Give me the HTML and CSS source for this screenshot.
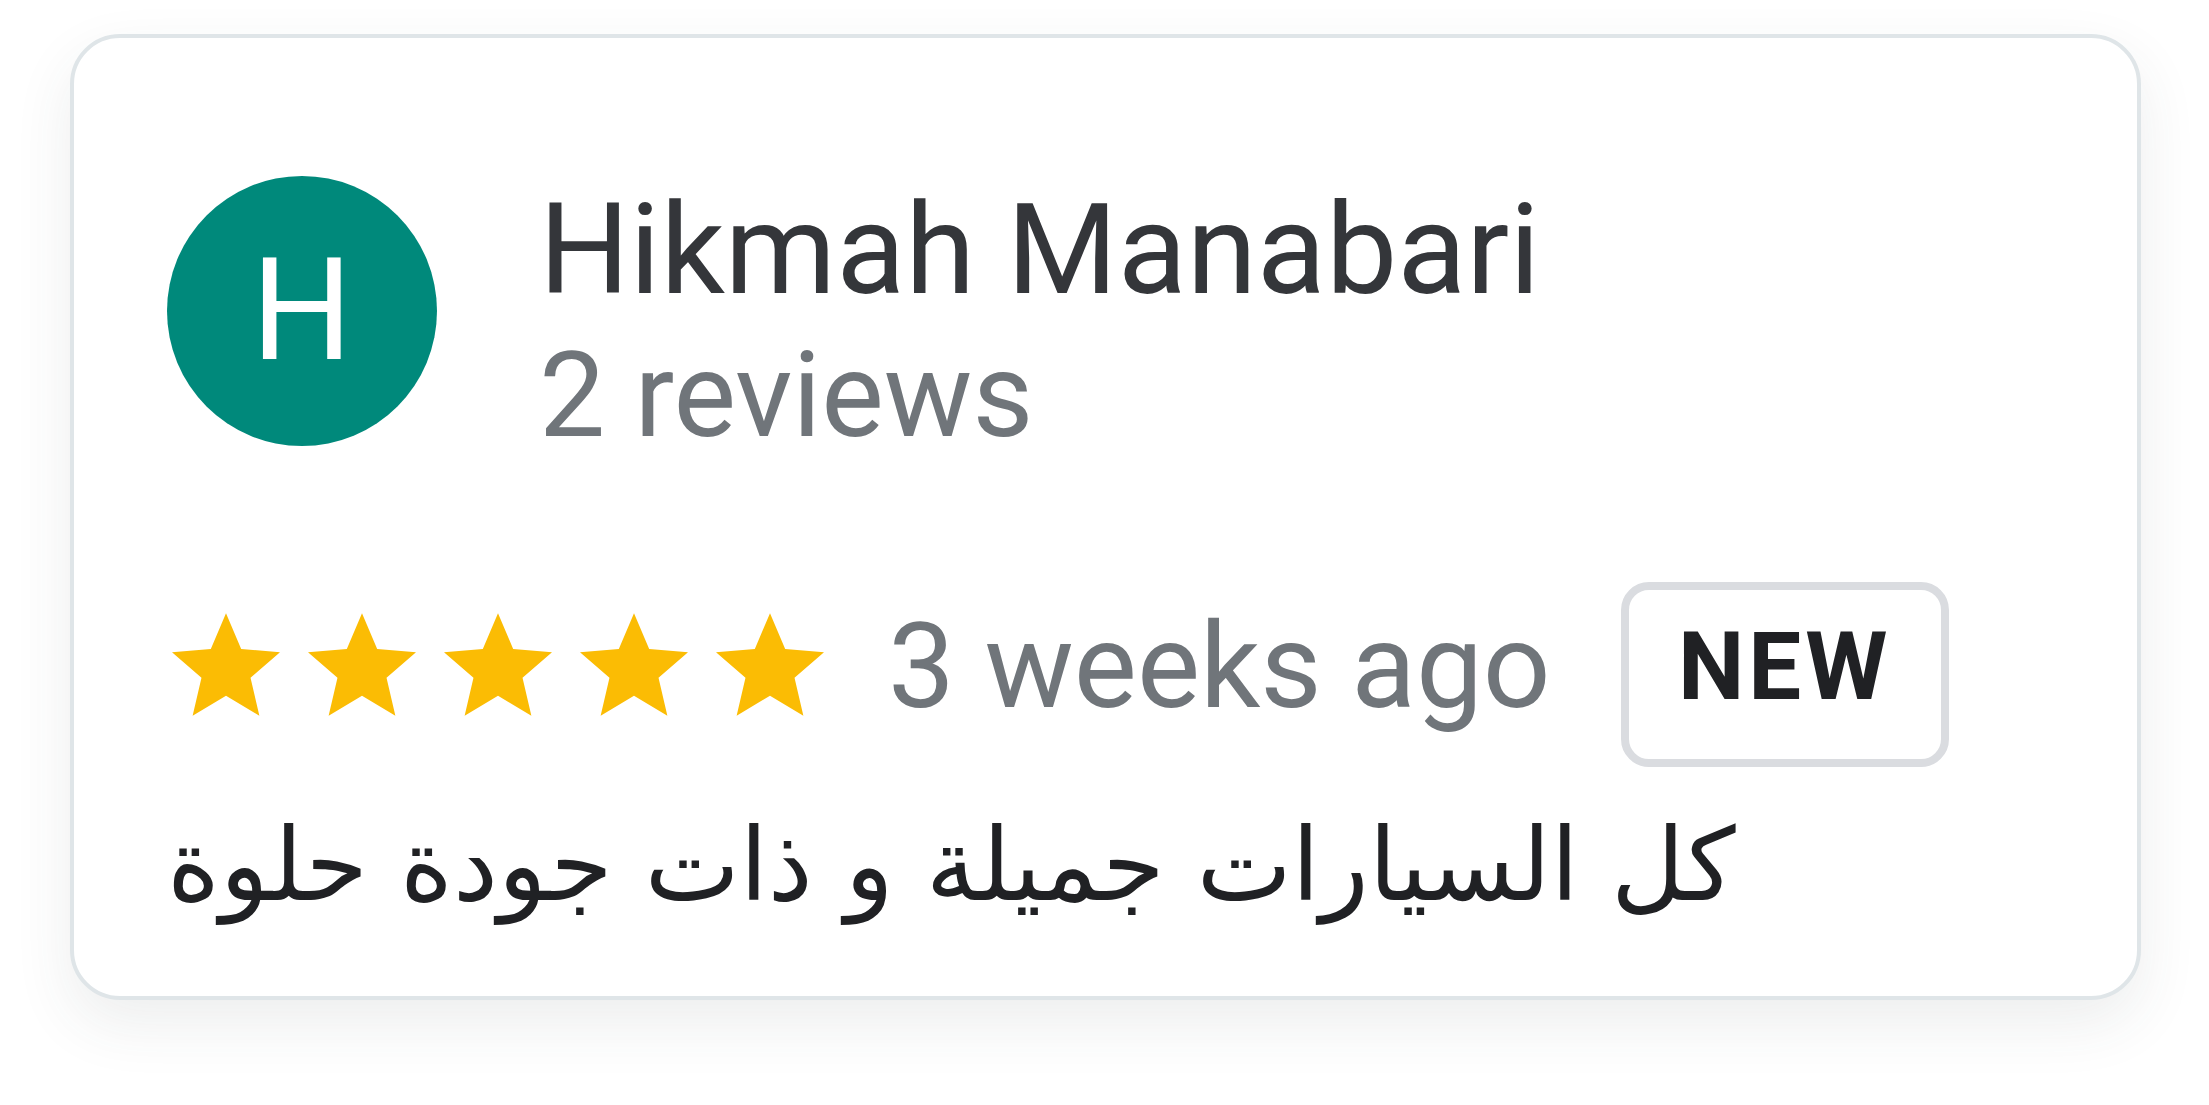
FILE: index.html
```html
<!DOCTYPE html>
<html lang="en">
<head>
<meta charset="utf-8">
<title>Review</title>
<link rel="stylesheet" href="styles.css">
</head>
<body>
<div class="card">
  <div class="header">
    <div class="avatar">H</div>
    <div class="who">
      <div class="name">Hikmah Manabari</div>
      <div class="count">2 reviews</div>
    </div>
  </div>
  <div class="meta">
    <div class="stars">
      <svg class="star" viewBox="2 2 20 19"><path d="M12 17.27L18.18 21l-1.64-7.03L22 9.24l-7.19-.61L12 2 9.19 8.63 2 9.24l5.46 4.73L5.82 21z"/></svg>
      <svg class="star" viewBox="2 2 20 19"><path d="M12 17.27L18.18 21l-1.64-7.03L22 9.24l-7.19-.61L12 2 9.19 8.63 2 9.24l5.46 4.73L5.82 21z"/></svg>
      <svg class="star" viewBox="2 2 20 19"><path d="M12 17.27L18.18 21l-1.64-7.03L22 9.24l-7.19-.61L12 2 9.19 8.63 2 9.24l5.46 4.73L5.82 21z"/></svg>
      <svg class="star" viewBox="2 2 20 19"><path d="M12 17.27L18.18 21l-1.64-7.03L22 9.24l-7.19-.61L12 2 9.19 8.63 2 9.24l5.46 4.73L5.82 21z"/></svg>
      <svg class="star" viewBox="2 2 20 19"><path d="M12 17.27L18.18 21l-1.64-7.03L22 9.24l-7.19-.61L12 2 9.19 8.63 2 9.24l5.46 4.73L5.82 21z"/></svg>
    </div>
    <div class="when">3 weeks ago</div>
    <div class="badge">NEW</div>
  </div>
  <div class="text">كل السيارات جميلة و ذات جودة حلوة</div>
</div>
</body>
</html>
```

FILE: styles.css
```css
html, body {
  margin: 0;
  padding: 0;
  background: #ffffff;
}

body {
  padding: 34px 0 0 70px;
  height: 1105px;
  box-sizing: border-box;
  font-family: Roboto, "DejaVu Sans", sans-serif;
}

.card {
  box-sizing: border-box;
  width: 2071px;
  height: 966px;
  border: 4px solid #dfe5e8;
  border-radius: 50px;
  background: #ffffff;
  box-shadow: 0 24px 60px rgba(60, 64, 67, 0.09);
  padding: 138px 60px 0 93px;
}

.header {
  display: flex;
  align-items: flex-start;
  height: 270px;
}

.avatar {
  width: 270px;
  height: 270px;
  border-radius: 50%;
  background: #00897b;
  color: #ffffff;
  font-family: Roboto, sans-serif;
  font-size: 142px;
  line-height: 270px;
  text-align: center;
  flex: none;
}

.who {
  margin-left: 102px;
  margin-top: 2px;
}

.name {
  font-size: 127px;
  line-height: 143px;
  color: #34363a;
  white-space: nowrap;
}

.count {
  font-size: 118px;
  line-height: 150px;
  color: #70757a;
  white-space: nowrap;
}

.meta {
  display: flex;
  align-items: center;
  margin-top: 136px;
  height: 185px;
}

.stars {
  display: flex;
  gap: 28px;
  margin-left: 5px;
  margin-bottom: 20px;
}

.star {
  width: 108px;
  height: 103px;
  fill: #fbbc04;
  display: block;
}

.when {
  margin-left: 64px;
  font-size: 119px;
  line-height: 150px;
  color: #70757a;
  white-space: nowrap;
  margin-bottom: 16px;
}

.badge {
  box-sizing: border-box;
  margin-left: 70px;
  width: 328px;
  height: 185px;
  border: 8px solid #dadce0;
  border-radius: 28px;
  display: flex;
  align-items: center;
  justify-content: center;
  padding-bottom: 16px;
  font-size: 94px;
  font-weight: 700;
  letter-spacing: 4px;
  color: #202124;
}

.text {
  margin-top: 23px;
  font-family: "DejaVu Sans", sans-serif;
  font-size: 101px;
  line-height: 150px;
  color: #202124;
  white-space: nowrap;
}
```
